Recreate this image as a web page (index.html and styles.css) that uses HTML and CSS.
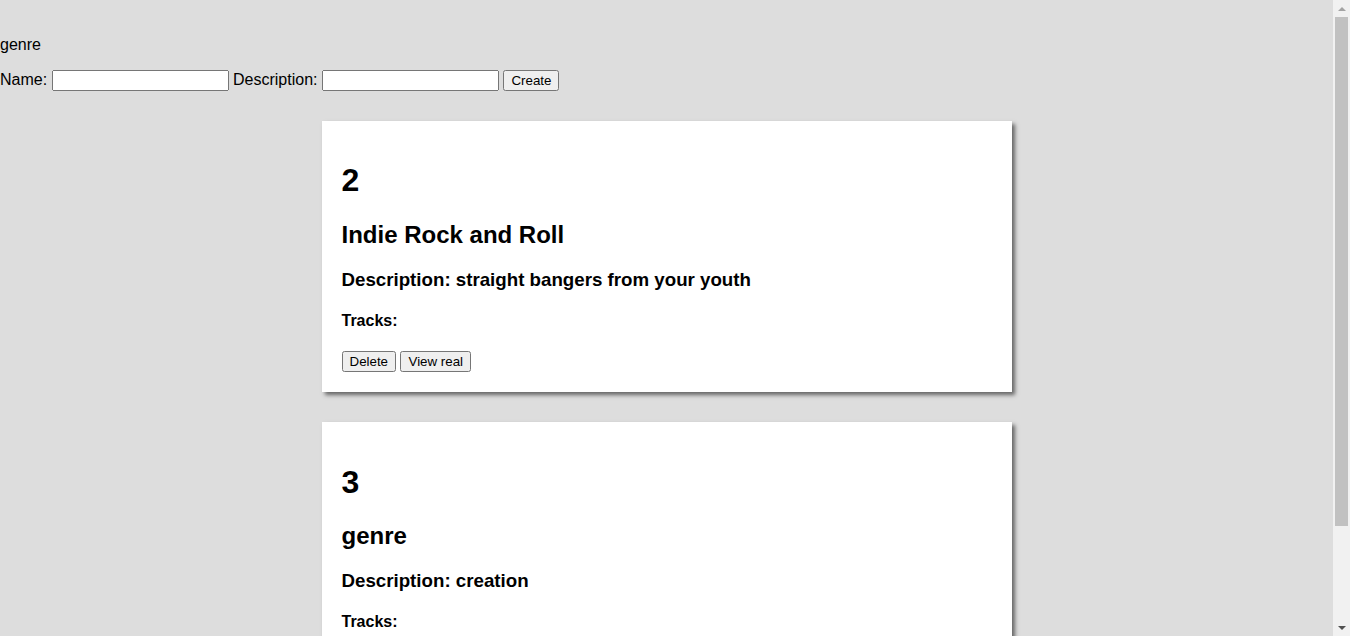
FILE: index.html
```html
<!DOCTYPE html>
<html>
<head>
<meta charset="utf-8">
<link rel="stylesheet" href="styles.css">
</head>
<body>
<header class="top">
  <p class="title">genre</p>
  <form class="create-form">
    <label>Name:</label> <input type="text"> <label>Description:</label> <input type="text"> <button type="button">Create</button>
  </form>
</header>
<main class="list">
  <section class="card">
    <h1>2</h1>
    <h2>Indie Rock and Roll</h2>
    <h3>Description: straight bangers from your youth</h3>
    <h4>Tracks:</h4>
    <div class="actions"><button type="button">Delete</button> <button type="button">View real</button></div>
  </section>
  <section class="card">
    <h1>3</h1>
    <h2>genre</h2>
    <h3>Description: creation</h3>
    <h4>Tracks:</h4>
    <div class="actions"><button type="button">Delete</button> <button type="button">View real</button></div>
  </section>
</main>
<div class="fake-scrollbar" aria-hidden="true">
  <div class="sb-arrow sb-up"></div>
  <div class="sb-track"><div class="sb-thumb"></div></div>
  <div class="sb-arrow sb-down"></div>
</div>
</body>
</html>
```

FILE: styles.css
```css
html {
  background: #dddddd;
}
body {
  margin: 0;
  padding-right: 17px;
  background: #dddddd;
  font-family: "Liberation Sans", Arial, sans-serif;
  font-size: 16px;
  color: #000;
}
.top {
  padding-top: 20px;
}
.title {
  margin: 16px 0;
}
.create-form {
  margin: 0;
}
.create-form input {
  width: 169px;
  font-family: "Liberation Sans", Arial, sans-serif;
}
button {
  font-family: "Liberation Sans", Arial, sans-serif;
}
.list {
  padding-top: 30px;
  padding-bottom: 30px;
}
.card {
  width: 650px;
  margin: 0 auto 30px;
  padding: 20px;
  background: #fff;
  box-shadow: 3px 3px 4px #666;
}
.card h1 { margin: 21.44px 0; font-size: 32px; }
.card h2 { margin: 19.92px 0; font-size: 24px; }
.card h3 { margin: 18.72px 0; font-size: 18.72px; }
.card h4 { margin: 21.28px 0; font-size: 16px; }
.actions {
  display: block;
}

/* decorative classic scrollbar, drawn over the right edge */
.fake-scrollbar {
  position: fixed;
  top: 0;
  right: 0;
  bottom: 0;
  width: 17px;
  background: #f1f1f1;
  display: flex;
  flex-direction: column;
}
.sb-arrow {
  height: 17px;
  flex: none;
  display: flex;
  align-items: center;
  justify-content: center;
}
.sb-arrow::before {
  content: "";
  width: 0;
  height: 0;
  border-left: 4px solid transparent;
  border-right: 4px solid transparent;
}
.sb-up::before {
  border-bottom: 4px solid #a3a3a3;
}
.sb-down::before {
  border-top: 4px solid #505050;
}
.sb-track {
  flex: 1;
  padding: 0 2px;
}
.sb-thumb {
  height: 509px;
  background: #c1c1c1;
}
```
